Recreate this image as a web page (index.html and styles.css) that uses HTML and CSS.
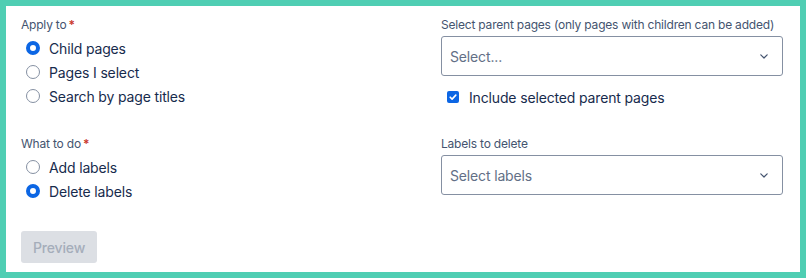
FILE: index.html
```html
<!DOCTYPE html>
<html lang="en">
  <head>
    <meta charset="UTF-8" />
    <meta name="viewport" content="width=device-width, initial-scale=1.0" />
    <title>Bulk labels</title>
    <link rel="stylesheet" href="styles.css">
  </head>
  <body>
    <div class="frame">
      <form class="panel">
        <div class="grid">
          <div class="field">
            <div class="label">Apply to<span class="req">*</span></div>
            <label class="option"><span class="radio checked"></span>Child pages</label>
            <label class="option"><span class="radio"></span>Pages I select</label>
            <label class="option"><span class="radio"></span>Search by page titles</label>
          </div>
          <div class="field">
            <div class="label">Select parent pages (only pages with children can be added)</div>
            <div class="select">
              <span>Select...</span>
              <svg class="chevron" width="8" height="5" viewBox="0 0 8 5"><path d="M0.8 0.8l3.2 3.2 3.2-3.2" fill="none" stroke="#44546f" stroke-width="1.2" stroke-linecap="round" stroke-linejoin="round"/></svg>
            </div>
            <label class="option check-row">
              <span class="checkbox">
                <svg width="10" height="10" viewBox="0 0 10 10"><path d="M2.2 5.2l1.9 1.9 3.7-4" fill="none" stroke="#fff" stroke-width="1.6" stroke-linecap="round" stroke-linejoin="round"/></svg>
              </span>
              Include selected parent pages
            </label>
          </div>
          <div class="field">
            <div class="label">What to do<span class="req">*</span></div>
            <label class="option"><span class="radio"></span>Add labels</label>
            <label class="option"><span class="radio checked"></span>Delete labels</label>
          </div>
          <div class="field">
            <div class="label">Labels to delete</div>
            <div class="select">
              <span>Select labels</span>
              <svg class="chevron" width="8" height="5" viewBox="0 0 8 5"><path d="M0.8 0.8l3.2 3.2 3.2-3.2" fill="none" stroke="#44546f" stroke-width="1.2" stroke-linecap="round" stroke-linejoin="round"/></svg>
            </div>
          </div>
        </div>
        <button type="button" class="preview" disabled>Preview</button>
      </form>
    </div>
  </body>
</html>
```

FILE: styles.css
```css
body {
  margin: 0;
  font-family: Inter, "Noto Sans", Arial, sans-serif;
  color: #172b4d;
}
.frame {
  width: 806px;
  height: 278px;
  box-sizing: border-box;
  border: 6px solid #4fceb3;
  background: white;
}
.panel {
  padding: 11px 17px 0 15px;
}
.grid {
  display: grid;
  grid-template-columns: 342px 342px;
  column-gap: 78px;
  row-gap: 27px;
}
.label {
  font-size: 12px;
  line-height: 16px;
  color: #44546f;
  margin-bottom: 3px;
  white-space: nowrap;
  letter-spacing: -0.2px;
}
.req {
  color: #c9372c;
  margin-left: 2px;
  font-weight: 600;
}
.option {
  display: flex;
  align-items: center;
  height: 24px;
  font-size: 14px;
  color: #172b4d;
  letter-spacing: -0.15px;
}
.radio {
  width: 14px;
  height: 14px;
  box-sizing: border-box;
  border: 1px solid #8590a2;
  border-radius: 50%;
  margin: 0 9px 0 5px;
}
.radio.checked {
  border: 4px solid #0c66e4;
  background: white;
}
.select {
  height: 40px;
  box-sizing: border-box;
  border: 1px solid #8590a2;
  border-radius: 3px;
  display: flex;
  align-items: center;
  justify-content: space-between;
  padding: 0 14px 0 8px;
  font-size: 14px;
  color: #626f86;
  letter-spacing: -0.15px;
}
.check-row {
  margin-top: 9px;
}
.checkbox {
  width: 12px;
  height: 12px;
  border-radius: 2px;
  background: #0c66e4;
  display: flex;
  align-items: center;
  justify-content: center;
  margin: 0 10px 0 6px;
}
.preview {
  margin-top: 28px;
  width: 76px;
  height: 32px;
  border: none;
  border-radius: 3px;
  background: #dcdfe4;
  color: #a5adba;
  font-family: inherit;
  font-size: 14px;
  font-weight: 500;
  letter-spacing: -0.15px;
}
```
